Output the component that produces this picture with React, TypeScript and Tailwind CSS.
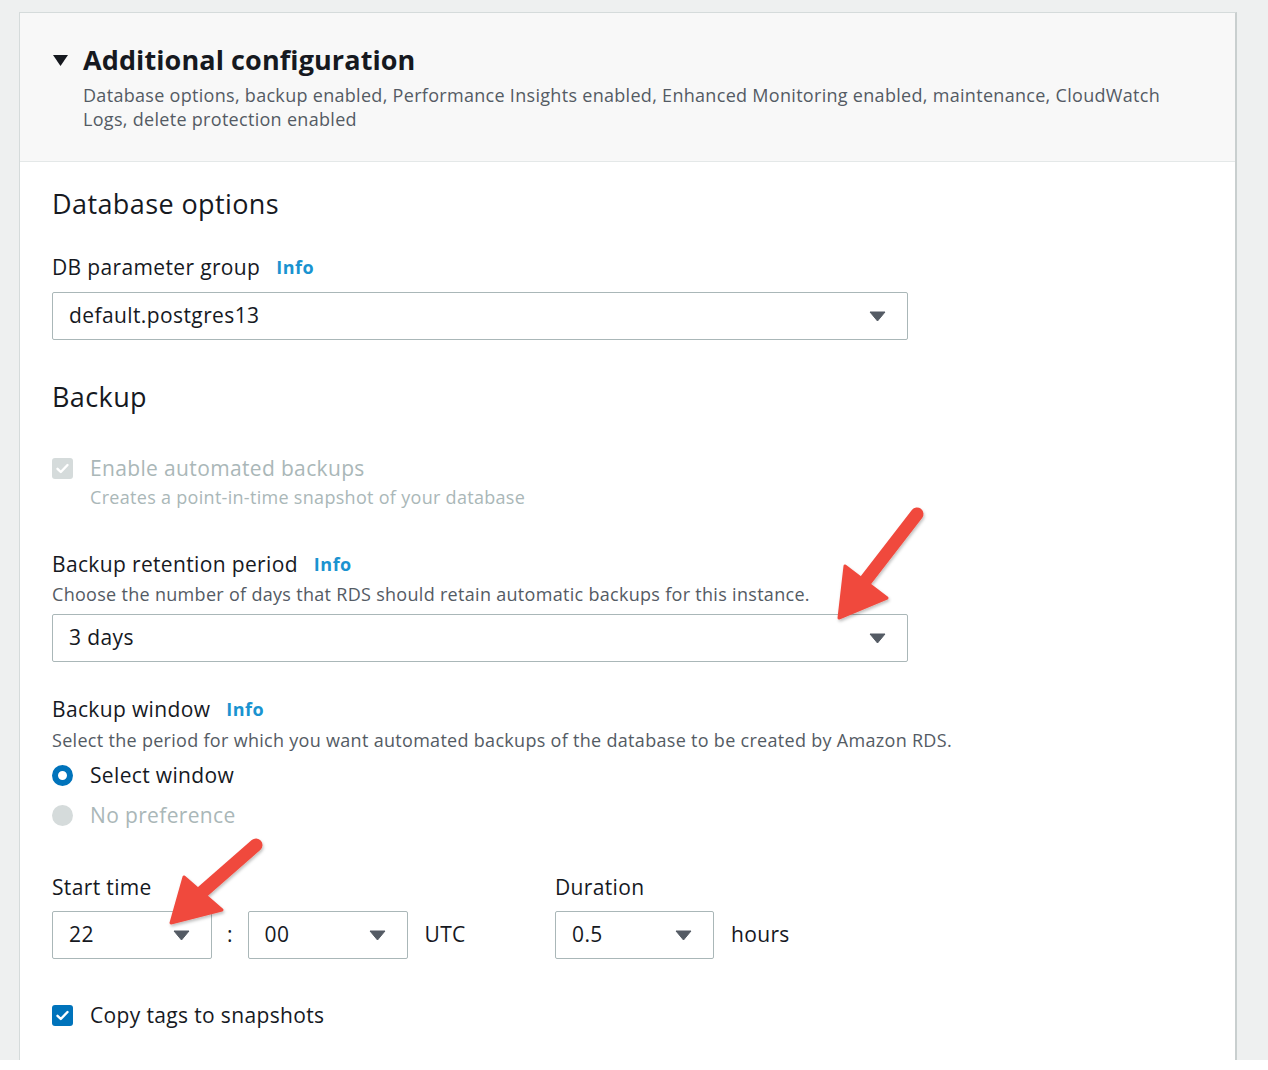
import React from 'react';

const Caret: React.FC = () => (
  <svg width="17" height="11" viewBox="0 0 17 11" className="shrink-0">
    <path d="M1 1h15l-7.5 9z" fill="#545b64" stroke="#545b64" strokeWidth="1" strokeLinejoin="round" />
  </svg>
);

const Select: React.FC<{ value: string; className?: string }> = ({ value, className = '' }) => (
  <div
    className={`flex h-[48px] items-center justify-between rounded-[2px] border border-[#aab7b8] bg-white pl-[16px] pr-[21px] text-[21px] tracking-[0.4px] text-[#16191f] ${className}`}
  >
    <span>{value}</span>
    <Caret />
  </div>
);

const Info: React.FC = () => (
  <span className="ml-[16px] text-[18px] font-bold tracking-[0.5px] text-[#1a93d0]">Info</span>
);

const Label: React.FC<{ text: string; info?: boolean; className?: string }> = ({ text, info, className = '' }) => (
  <div className={`flex items-center text-[21px] leading-[28px] tracking-[0.35px] text-[#16191f] ${className}`}>
    <span>{text}</span>
    {info && <Info />}
  </div>
);

const Desc: React.FC<{ text: string; className?: string }> = ({ text, className = '' }) => (
  <p className={`text-[18px] leading-[22px] tracking-[0.3px] ${className}`}>{text}</p>
);

const Check: React.FC<{ color: string }> = ({ color }) => (
  <span className="flex h-[21px] w-[21px] items-center justify-center rounded-[3px]" style={{ backgroundColor: color }}>
    <svg width="15" height="15" viewBox="0 0 15 15">
      <path d="M2.5 7.8l3.3 3.2 6.7-7" fill="none" stroke="#fff" strokeWidth="2.4" strokeLinecap="round" strokeLinejoin="round" />
    </svg>
  </span>
);

const Arrows: React.FC = () => (
  <svg className="pointer-events-none absolute left-0 top-0" width="1268" height="1070">
    <defs>
      <filter id="sh" x="-20%" y="-20%" width="140%" height="140%">
        <feDropShadow dx="1" dy="2" stdDeviation="1.5" floodColor="#000" floodOpacity="0.25" />
      </filter>
    </defs>
    <g fill="#f04a3e" stroke="#f04a3e" filter="url(#sh)">
      <line x1="917" y1="514" x2="866" y2="580" strokeWidth="13" strokeLinecap="round" />
      <path d="M839 618 L845 566 L887 598 Z" strokeWidth="3" strokeLinejoin="round" />
      <line x1="256" y1="845" x2="200" y2="894" strokeWidth="13" strokeLinecap="round" />
      <path d="M171 923 L184 877 L222 910 Z" strokeWidth="3" strokeLinejoin="round" />
    </g>
  </svg>
);

const App: React.FC = () => {
  return (
    <div className="relative h-[1070px] w-[1268px] overflow-hidden bg-white" style={{ fontFamily: '"Open Sans", "Noto Sans", sans-serif' }}>
      <div className="h-[1060px] bg-[#eef0f0] pl-[19px] pr-[31px] pt-[12px]">
        <div className="h-full border border-r-2 border-b-0 border-[#d5dbdb] border-r-[#c9cfcf] bg-white">
          {/* Header */}
          <div className="h-[149px] border-b border-[#e4e8e8] bg-[#f8f8f8] pl-[32px] pt-[29px]">
            <div className="flex items-center">
              <svg width="17" height="13" viewBox="0 0 17 13" className="mr-[14px]">
                <path d="M1 1h15l-7.5 11z" fill="#16191f" />
              </svg>
              <h2 className="text-[27px] font-bold leading-[36px] tracking-[0.1px] text-[#16191f]">Additional configuration</h2>
            </div>
            <p className="mt-[5px] w-[1120px] pl-[31px] text-[18px] leading-[24px] tracking-[0.3px] text-[#545b64]">
              Database options, backup enabled, Performance Insights enabled, Enhanced Monitoring enabled, maintenance, CloudWatch
              Logs, delete protection enabled
            </p>
          </div>

          {/* Body */}
          <div className="pl-[32px]">
            <h3 className="pt-[25px] text-[27px] leading-[34px] tracking-[0.4px] text-[#16191f]">Database options</h3>
            <Label text="DB parameter group" info className="mt-[32px]" />
            <Select value="default.postgres13" className="mt-[11px] w-[856px]" />

            <h3 className="mt-[40px] text-[27px] leading-[34px] tracking-[0.4px] text-[#16191f]">Backup</h3>
            <div className="mt-[40px] flex items-center gap-[17px]">
              <Check color="#d5dbdb" />
              <span className="text-[21px] leading-[28px] tracking-[0.35px] text-[#aab7b8]">Enable automated backups</span>
            </div>
            <Desc text="Creates a point-in-time snapshot of your database" className="mt-[4px] pl-[38px] text-[#aab7b8]" />

            <Label text="Backup retention period" info className="mt-[42px]" />
            <Desc text="Choose the number of days that RDS should retain automatic backups for this instance." className="mt-[5px] text-[#545b64]" />
            <Select value="3 days" className="mt-[9px] w-[856px]" />

            <Label text="Backup window" info className="mt-[33px]" />
            <Desc text="Select the period for which you want automated backups of the database to be created by Amazon RDS." className="mt-[6px] text-[#545b64]" />
            <div className="mt-[10px] flex items-center gap-[17px]">
              <span className="h-[21px] w-[21px] rounded-full border-[6px] border-[#0073bb] bg-white" />
              <span className="text-[21px] leading-[28px] tracking-[0.35px] text-[#16191f]">Select window</span>
            </div>
            <div className="mt-[12px] flex items-center gap-[17px]">
              <span className="h-[21px] w-[21px] rounded-full bg-[#d5dbdb]" />
              <span className="text-[21px] leading-[28px] tracking-[0.35px] text-[#aab7b8]">No preference</span>
            </div>

            <div className="mt-[44px] flex">
              <div className="w-[503px]">
                <Label text="Start time" />
                <div className="mt-[10px] flex items-center">
                  <Select value="22" className="w-[160px]" />
                  <span className="mx-[15px] text-[21px] text-[#16191f]">:</span>
                  <Select value="00" className="w-[160px]" />
                  <span className="ml-[17px] text-[21px] tracking-[0.35px] text-[#16191f]">UTC</span>
                </div>
              </div>
              <div>
                <Label text="Duration" />
                <div className="mt-[10px] flex items-center">
                  <Select value="0.5" className="w-[159px]" />
                  <span className="ml-[17px] text-[21px] tracking-[0.35px] text-[#16191f]">hours</span>
                </div>
              </div>
            </div>

            <div className="mt-[42px] flex items-center gap-[17px]">
              <Check color="#0073bb" />
              <span className="text-[21px] leading-[28px] tracking-[0.35px] text-[#16191f]">Copy tags to snapshots</span>
            </div>
          </div>
        </div>
      </div>
      <Arrows />
    </div>
  );
};

export default App;
